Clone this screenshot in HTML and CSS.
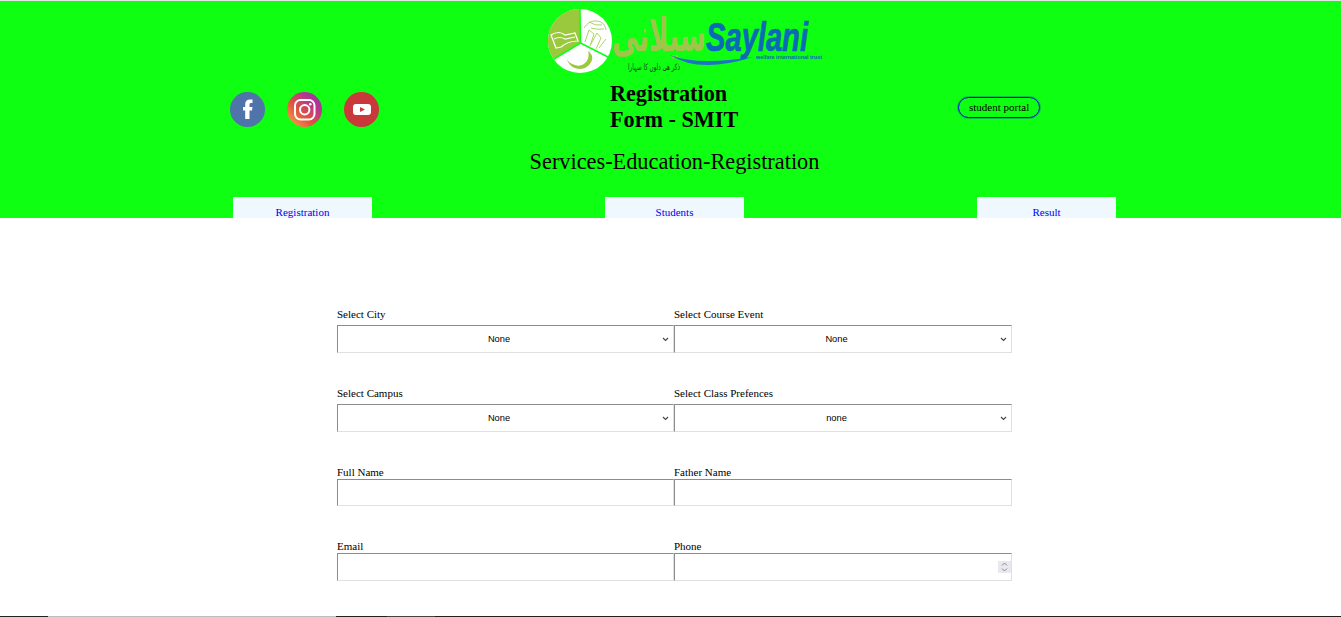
FILE: index.html
```html
<!DOCTYPE html>
<html lang="en">
<head>
    <meta charset="UTF-8">
    <meta name="viewport" content="width=device-width, initial-scale=1.0">
    <title>Registration Form - SMIT</title>
    <link rel="stylesheet" href="styles.css">
</head>
<body>
<header class="top">
    <div class="logo-row">
        <svg class="logo" width="300" height="70" viewBox="0 0 300 70" role="img" aria-label="Saylani welfare international trust">
            <!-- круглая эмблема -->
            <circle cx="33" cy="33" r="32" fill="#fff"/>
            <path d="M33 35 L33 1 A32 32 0 0 0 6.500 51 Z" fill="#9bc93e"/>
            <path d="M33 1 L33.500 35 L7 51 M33.500 35 L61 49" fill="none" stroke="#0fff12" stroke-width="1.500"/>
            <path d="M4 27 Q12 22 18 27 L28 25 L31 33 Q21 33 14 39 L9 40 Z M7 31 Q13 28 18 31 L28 29" fill="none" stroke="#fff" stroke-width="1.200"/>
            <path d="M20 51 C22 62 40 66 45 52 C46 48 44 45 41 43 C44 52 36 60 28 57 C24 56 21 54 20 51 Z" fill="#9bc93e"/>
            <path d="M37 20 Q42 12 50 13 Q58 14 59 22 M42 14 Q48 18 55 17 M44 20 Q50 22 57 21 M38 34 L42 22 L47 26 L43 38 M44 36 L50 25 L54 30 L49 41 M52 40 L59 31" fill="none" stroke="#9bc93e" stroke-width="0.800"/>
            <!-- надписи логотипа -->
            <text class="logo-urdu" x="65" y="43" textLength="94" lengthAdjust="spacingAndGlyphs">سیلانی</text>
            <path d="M123 47 Q150 58 206 49 Q152 66 123 47 Z" fill="#1e73c8"/>
            <text class="logo-name" x="159" y="43" textLength="102" lengthAdjust="spacingAndGlyphs">Saylani</text>
            <text class="logo-sub" x="209" y="51" textLength="66" lengthAdjust="spacingAndGlyphs">welfare international trust</text>
            <text class="logo-tag" x="81" y="62" textLength="52" lengthAdjust="spacingAndGlyphs">ذکر هی دلوں کا سہارا</text>
        </svg>
    </div>
    <div class="info-row">
        <div class="socials">
            <a href="#" class="social" aria-label="Facebook">
                <svg width="35" height="35" viewBox="0 0 35 35"><circle cx="17.500" cy="17.500" r="17.500" fill="#4f74a9"/><path d="M19.500 27 V18.500 H22 L22.500 15 H19.500 V12.800 C19.500 11.600 20 11 21.200 11 H22.500 V7.500 H20 C16.800 7.500 15.200 9.400 15.200 12.300 V15 H13 V18.500 H15.200 V27 Z" fill="#fff"/></svg>
            </a>
            <a href="#" class="social" aria-label="Instagram">
                <svg width="35" height="35" viewBox="0 0 35 35">
                    <defs><linearGradient id="ig" x1="0" y1="1" x2="1" y2="0"><stop offset="0" stop-color="#fcb045"/><stop offset=".4" stop-color="#e1543f"/><stop offset=".7" stop-color="#b6358f"/><stop offset="1" stop-color="#8f3aa8"/></linearGradient></defs>
                    <circle cx="17.500" cy="17.500" r="17.500" fill="url(#ig)"/>
                    <rect x="8" y="8" width="19.500" height="19.500" rx="5.500" fill="none" stroke="#fff" stroke-width="2"/>
                    <circle cx="17.700" cy="17.700" r="4.700" fill="none" stroke="#fff" stroke-width="2"/>
                    <circle cx="23.300" cy="12.200" r="1.300" fill="#fff"/>
                </svg>
            </a>
            <a href="#" class="social" aria-label="YouTube">
                <svg width="35" height="35" viewBox="0 0 35 35"><circle cx="17.500" cy="17.500" r="17.500" fill="#c9383a"/><rect x="9" y="12" width="18" height="11" rx="3" fill="#fff"/><path d="M16 15 L21 17.500 L16 20 Z" fill="#c9383a"/></svg>
            </a>
        </div>
        <h1 class="title">Registration<br>Form - SMIT</h1>
        <a href="#" class="portal">student portal</a>
    </div>
    <h2 class="subtitle">Services-Education-Registration</h2>
    <nav class="tabs">
        <a href="#" class="tab">Registration</a>
        <a href="#" class="tab">Students</a>
        <a href="#" class="tab">Result</a>
    </nav>
</header>

<form class="reg-form">
    <div class="field">
        <label for="city">Select City</label>
        <select id="city"><option>None</option></select>
    </div>
    <div class="field">
        <label for="course">Select Course Event</label>
        <select id="course"><option>None</option></select>
    </div>
    <div class="field">
        <label for="campus">Select Campus</label>
        <select id="campus"><option>None</option></select>
    </div>
    <div class="field">
        <label for="prefs">Select Class Prefences</label>
        <select id="prefs"><option>none</option></select>
    </div>
    <div class="field">
        <label for="fullname">Full Name</label>
        <input id="fullname" type="text">
    </div>
    <div class="field">
        <label for="father">Father Name</label>
        <input id="father" type="text">
    </div>
    <div class="field">
        <label for="email">Email</label>
        <input id="email" type="email">
    </div>
    <div class="field">
        <label for="phone">Phone</label>
        <div class="number-wrap">
            <input id="phone" type="number">
            <span class="spin">
                <svg width="13" height="12" viewBox="0 0 13 12"><path d="M4 4.500 L6.500 2 L9 4.500 M4 7.500 L6.500 10 L9 7.500" fill="none" stroke="#8a8a8a" stroke-width="1"/></svg>
            </span>
        </div>
    </div>
</form>

<div class="bottom-strip">
    <span class="seg seg-a"></span>
    <span class="seg seg-b"></span>
    <span class="seg seg-c"></span>
    <span class="seg seg-d"></span>
    <span class="seg seg-e"></span>
</div>
</body>
</html>
```

FILE: styles.css
```css
/* Общие стили */
html, body { height: 100%; }
body {
    margin: 0;
    font-family: "Liberation Serif", "Times New Roman", serif;
    font-size: 11px;
    color: #000;
    background-color: #fff;
    display: flex;
    flex-direction: column;
    overflow: hidden;
}

/* Шапка */
.top {
    height: 217px;
    flex-shrink: 0;
    background-color: #0fff12;
    border-top: 1px solid #e4e4e4;
    overflow: hidden;
}

.logo-row {
    display: flex;
    justify-content: center;
    padding-top: 7px;
    padding-left: 53px;
}

.logo-urdu {
    font-family: "DejaVu Sans", sans-serif;
    font-size: 46px;
    font-weight: bold;
    fill: #9fc64a;
}

.logo-name {
    font-family: "Liberation Sans", Arial, sans-serif;
    font-size: 40px;
    font-weight: bold;
    font-style: italic;
    fill: #0a6ab8;
    stroke: #0a6ab8;
    stroke-width: 0.7px;
}

.logo-sub {
    font-family: "Liberation Sans", Arial, sans-serif;
    font-size: 5px;
    font-weight: bold;
    fill: #0a6ab8;
}

.logo-tag {
    font-family: "DejaVu Sans", sans-serif;
    font-size: 9px;
    fill: #1a3a1a;
}

.info-row {
    display: flex;
    align-items: flex-start;
    margin-top: 3px;
    padding-left: 230px;
}

.socials {
    display: flex;
    gap: 22px;
    width: 380px;
    padding-top: 11px;
}

.social {
    display: block;
    height: 35px;
}

.title {
    margin: 0;
    width: 347px;
    font-size: 22.2px;
    line-height: 25.5px;
    font-weight: bold;
}

.portal {
    margin-top: 16px;
    margin-left: 1px;
    padding: 0 10px;
    height: 19px;
    line-height: 19px;
    border: 1px solid #0000ee;
    outline: 1px solid rgba(0, 0, 238, 0.25);
    border-radius: 12px;
    font-size: 11px;
    color: #000;
    text-decoration: none;
}

.subtitle {
    margin: 17px 0 0;
    padding-left: 8px;
    text-align: center;
    font-size: 22.3px;
    line-height: 26px;
    font-weight: normal;
}

.tabs {
    display: flex;
    gap: 233px;
    margin-top: 22px;
    padding-left: 233px;
}

.tab {
    width: 139px;
    height: 40px;
    padding-top: 9px;
    background-color: #f0f8ff;
    color: #0000ee;
    text-align: center;
    text-decoration: none;
    line-height: 13px;
}

/* Форма */
.reg-form {
    display: grid;
    grid-template-columns: 337px 338px;
    row-gap: 34px;
    margin-top: 90px;
    margin-left: 337px;
    align-items: end;
}

.field label {
    display: block;
    line-height: 13px;
}

.field select,
.field input {
    display: block;
    width: 100%;
    box-sizing: border-box;
    background-color: #fff;
    border-style: solid;
    border-width: 1px;
    border-color: #8c8c8c #e0e0e0 #e0e0e0 #8c8c8c;
    border-radius: 0;
    font-family: "Liberation Sans", Arial, sans-serif;
    font-size: 9.3px;
}

.field select {
    height: 28px;
    margin-top: 4px;
    padding: 0 13px 0 0;
    text-align: center;
    appearance: none;
    color: #000;
    background-image: url("data:image/svg+xml,%3Csvg xmlns='http://www.w3.org/2000/svg' width='7' height='5'%3E%3Cpath d='M1 1 L3.500 3.500 L6 1' fill='none' stroke='%23444' stroke-width='1.100'/%3E%3C/svg%3E");
    background-repeat: no-repeat;
    background-position: right 4px center;
}

.field input {
    height: 27px;
}

.field input[type=email],
.field input[type=number] {
    height: 28px;
}

.field input[type=number] {
    appearance: textfield;
}

.number-wrap {
    position: relative;
}

.spin {
    position: absolute;
    top: 8px;
    right: 1px;
    width: 13px;
    height: 12px;
    background-color: #e8e8ee;
}

.spin svg {
    display: block;
}

/* Полоска внизу */
.bottom-strip {
    margin-top: auto;
    height: 1px;
    flex-shrink: 0;
    display: flex;
}

.seg { display: block; }
.seg-a { width: 48px; background-color: #222; }
.seg-b { width: 288px; background-color: #bdbdbd; }
.seg-c { width: 51px; background-color: #2a1f1f; }
.seg-d { width: 48px; background-color: #4a4040; }
.seg-e { flex-grow: 1; background-color: #2a1c1c; }
```
